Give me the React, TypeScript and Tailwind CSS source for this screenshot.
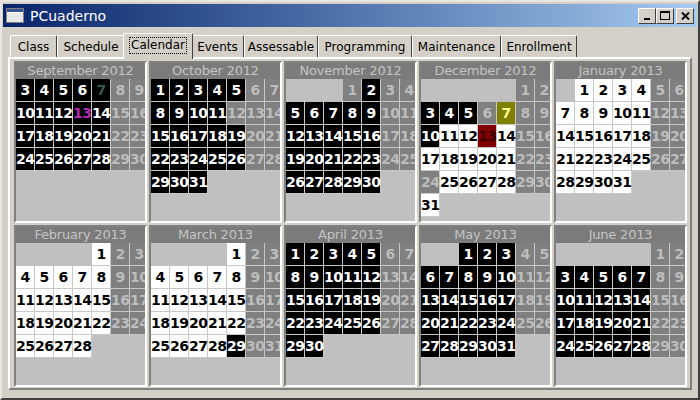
import React from 'react';

type Kind = 'k' | 'g' | 'w' | 'green' | 'pink' | 'olive' | 'red';

interface Month {
  name: string;
  first: number; // weekday of day 1, 0 = Monday
  days: number;
  start?: number;
  base: Kind;
  over?: Record<number, Kind>;
}

const kindClass: Record<Kind, string> = {
  k: 'bg-black text-white',
  g: 'bg-[#808080] text-[#bdbdbd]',
  w: 'bg-white text-black',
  green: 'bg-black text-[#2d5f45]',
  pink: 'bg-black text-[#b42ab4]',
  olive: 'bg-[#808000] text-[#ffff99]',
  red: 'bg-[#800000] text-[#3c0000]',
};

const months: Month[] = [
  { name: 'September 2012', first: 5, days: 30, start: 3, base: 'k', over: { 7: 'green', 13: 'pink' } },
  { name: 'October 2012', first: 0, days: 31, base: 'k', over: { 12: 'g' } },
  { name: 'November 2012', first: 3, days: 30, base: 'k', over: { 1: 'g' } },
  {
    name: 'December 2012',
    first: 5,
    days: 31,
    base: 'w',
    over: { 3: 'k', 4: 'k', 5: 'k', 6: 'g', 7: 'olive', 10: 'k', 13: 'red', 24: 'g' },
  },
  { name: 'January 2013', first: 1, days: 31, base: 'w' },
  { name: 'February 2013', first: 4, days: 28, base: 'w' },
  { name: 'March 2013', first: 4, days: 31, base: 'w', over: { 29: 'k' } },
  { name: 'April 2013', first: 0, days: 30, base: 'k' },
  { name: 'May 2013', first: 2, days: 31, base: 'k' },
  { name: 'June 2013', first: 5, days: 30, base: 'k' },
];

type Cell = { d: number; kind: Kind } | null;

function buildRows(m: Month): Cell[][] {
  const cells: Cell[] = [];
  for (let i = 0; i < m.first; i++) cells.push(null);
  for (let d = 1; d <= m.days; d++) {
    const col = (m.first + d - 1) % 7;
    if (m.start && d < m.start) {
      cells.push(null);
      continue;
    }
    const kind = m.over?.[d] ?? (col >= 5 ? 'g' : m.base);
    cells.push({ d, kind });
  }
  while (cells.length % 7) cells.push(null);
  const rows: Cell[][] = [];
  for (let i = 0; i < cells.length; i += 7) rows.push(cells.slice(i, i + 7));
  return rows.filter((r) => r.some((c) => c));
}

const MonthPanel: React.FC<{ month: Month }> = ({ month }) => (
  <div className="w-[133px] h-[162px] overflow-hidden bg-[#c0c0c0] border-2 border-t-[#808080] border-l-[#808080] border-r-white border-b-white">
    <div className="h-[16px] bg-[#7b7b7b] text-[#c4c4c4] text-[13px] leading-[16px] text-center whitespace-nowrap tracking-[-0.2px]">
      {month.name}
    </div>
    {buildRows(month).map((row, i) => (
      <div key={i} className="flex">
        {row.map((c, j) =>
          c ? (
            <div
              key={j}
              className={`w-[19px] h-[23px] shrink-0 border-r border-b border-[#c8c8c8] text-center leading-[22px] font-bold text-[14px] tracking-[-0.6px] whitespace-nowrap ${kindClass[c.kind]}`}
            >
              {c.d}
            </div>
          ) : (
            <div key={j} className="w-[19px] h-[23px] shrink-0" />
          )
        )}
      </div>
    ))}
  </div>
);

const tabs = [
  { label: 'Class', w: 'w-[47px]' },
  { label: 'Schedule', w: 'w-[68px]' },
  { label: 'Calendar', w: 'w-[70px]', active: true },
  { label: 'Events', w: 'w-[53px]' },
  { label: 'Assessable', w: 'w-[74px]' },
  { label: 'Programming', w: 'w-[94px]' },
  { label: 'Maintenance', w: 'w-[89px]' },
  { label: 'Enrollment', w: 'w-[76px]' },
];

const TitleButton: React.FC<{ children: React.ReactNode; className?: string }> = ({ children, className }) => (
  <div
    className={`w-[18px] h-[16px] bg-[#d4d0c8] border border-t-white border-l-white border-r-[#404040] border-b-[#404040] flex items-center justify-center ${className ?? ''}`}
  >
    {children}
  </div>
);

export default function App() {
  return (
    <div className="w-[700px] h-[400px] bg-[#d4d0c8] border-2 border-t-[#e8e6e0] border-l-[#e8e6e0] border-r-[#404040] border-b-[#404040] flex flex-col font-['DejaVu_Sans',sans-serif] overflow-hidden">
      {/* title bar */}
      <div className="mx-[1px] mt-[2px] h-[23px] bg-gradient-to-r from-[#0a246a] to-[#a6caf0] flex items-center pl-[3px] pr-[3px]">
        <svg width="18" height="15" viewBox="0 0 18 15" className="shrink-0">
          <rect x="0.5" y="0.5" width="17" height="14" fill="#e8e8e8" stroke="#808080" />
          <rect x="1" y="1" width="16" height="3" fill="#3a4e9a" />
          <rect x="1" y="4" width="16" height="1" fill="#ffffff" />
        </svg>
        <span className="ml-[6px] text-white text-[14px] leading-none">PCuaderno</span>
        <div className="ml-auto flex items-center">
          <TitleButton>
            <svg width="8" height="8" viewBox="0 0 8 8">
              <rect x="1" y="6" width="6" height="2" fill="#000" />
            </svg>
          </TitleButton>
          <TitleButton>
            <svg width="10" height="9" viewBox="0 0 10 9">
              <rect x="0.5" y="0.5" width="9" height="8" fill="none" stroke="#000" />
              <rect x="0" y="0" width="10" height="2" fill="#000" />
            </svg>
          </TitleButton>
          <TitleButton className="ml-[2px]">
            <svg width="9" height="8" viewBox="0 0 9 8">
              <path d="M1 0.5 L8 7.5 M8 0.5 L1 7.5" stroke="#000" strokeWidth="1.8" />
            </svg>
          </TitleButton>
        </div>
      </div>

      {/* body */}
      <div className="flex-1 flex flex-col px-[6px] pb-[8px]">
        <div className="h-[30px] flex items-end pl-[2px]">
          {tabs.map((t) =>
            t.active ? (
              <div
                key={t.label}
                className={`${t.w} relative z-10 -mx-[2px] -mb-[2px] h-[26px] px-[2px] bg-[#d4d0c8] border-t border-l border-r border-t-white border-l-white border-r-[#404040] rounded-t-[2px] flex items-start justify-center pt-[3px] text-[12px] text-black`}
              >
                <span className="border border-dotted border-black px-[1px] leading-[15px]">{t.label}</span>
              </div>
            ) : (
              <div
                key={t.label}
                className={`${t.w} h-[22px] border-t border-l border-r border-t-white border-l-white border-r-[#404040] rounded-t-[2px] flex items-center justify-center text-[12px] text-black`}
              >
                {t.label}
              </div>
            )
          )}
        </div>
        <div className="flex-1 border-2 border-t-white border-l-white border-r-[#808080] border-b-[#808080] pt-[2px] pl-[4px] pr-[2px]">
          <div className="grid grid-cols-[repeat(5,133px)] gap-[2px]">
            {months.map((m) => (
              <MonthPanel key={m.name} month={m} />
            ))}
          </div>
        </div>
      </div>
    </div>
  );
}
